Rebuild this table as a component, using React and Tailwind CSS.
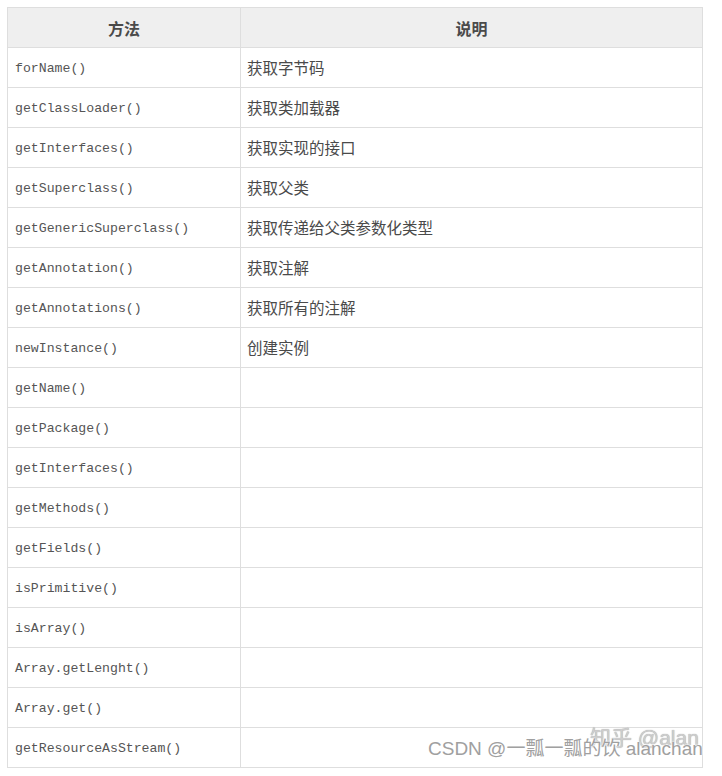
import React from "react";

const rows = [
  ["forName()", "获取字节码"],
  ["getClassLoader()", "获取类加载器"],
  ["getInterfaces()", "获取实现的接口"],
  ["getSuperclass()", "获取父类"],
  ["getGenericSuperclass()", "获取传递给父类参数化类型"],
  ["getAnnotation()", "获取注解"],
  ["getAnnotations()", "获取所有的注解"],
  ["newInstance()", "创建实例"],
  ["getName()", ""],
  ["getPackage()", ""],
  ["getInterfaces()", ""],
  ["getMethods()", ""],
  ["getFields()", ""],
  ["isPrimitive()", ""],
  ["isArray()", ""],
  ["Array.getLenght()", ""],
  ["Array.get()", ""],
  ["getResourceAsStream()", ""],
];

export default function App() {
  return (
    <div className="relative w-[722px] h-[776px] bg-white overflow-hidden">
      <div className="pt-[7px] pl-[7px]">
        <table className="w-[696px] table-fixed border-collapse text-[#333]">
          <colgroup>
            <col className="w-[233px]" />
            <col />
          </colgroup>
          <thead>
            <tr className="h-[40px] bg-[#efefef]">
              <th className="border border-[#dedede] text-center font-bold text-[16px] text-[#4a4a4a] [font-family:'Noto_Sans_CJK_SC',sans-serif]">
                方法
              </th>
              <th className="border border-[#dedede] text-center font-bold text-[16px] text-[#4a4a4a] [font-family:'Noto_Sans_CJK_SC',sans-serif]">
                说明
              </th>
            </tr>
          </thead>
          <tbody>
            {rows.map(([m, d], i) => (
              <tr key={i} className="h-[40px]">
                <td className="border border-[#dedede] pl-[7px] pt-[2px] text-[13.2px] text-[#555] [font-family:'Liberation_Mono','Noto_Sans_CJK_SC',monospace]">
                  {m}
                </td>
                <td className="border border-[#dedede] pl-[6px] text-[15.5px] text-[#4a4a4a] [font-family:'Noto_Sans_CJK_SC',sans-serif]">
                  {d}
                </td>
              </tr>
            ))}
          </tbody>
        </table>
      </div>

      {/* watermarks */}
      <div className="absolute left-[590px] top-[727px] text-[21px] leading-none text-[#cdcdcd] whitespace-nowrap [font-family:'Liberation_Sans','Noto_Sans_CJK_SC',sans-serif] [text-shadow:0_0_1px_#999]">
        知乎 @alan
      </div>
      <div className="absolute left-[428px] top-[739px] text-[19px] leading-none text-[#a0a0a0] whitespace-nowrap [font-family:'Liberation_Sans','Noto_Sans_CJK_SC',sans-serif] [text-shadow:0_0_2px_#fff,0_0_2px_#fff]">
        CSDN @一瓢一瓢的饮 alanchan
      </div>
    </div>
  );
}
